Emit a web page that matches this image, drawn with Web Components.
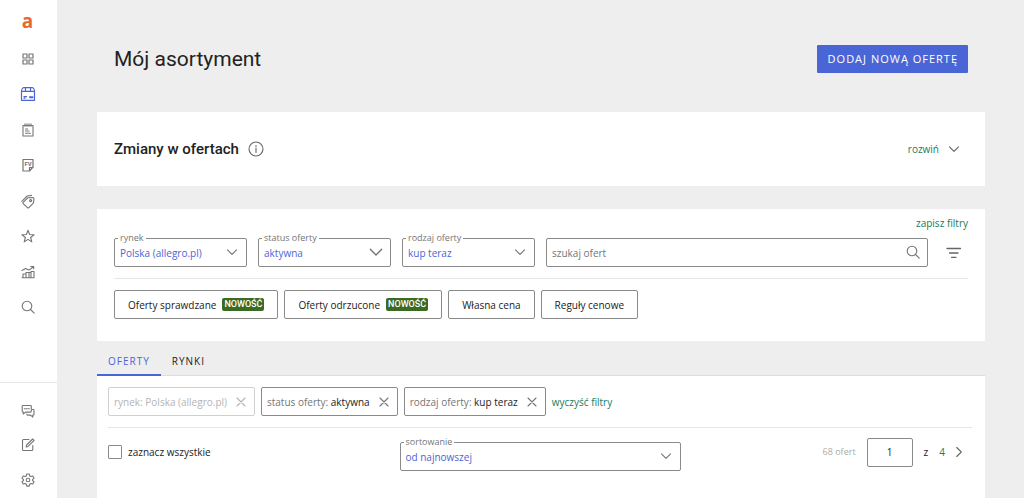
<!DOCTYPE html>
<html lang="pl">
<head>
<meta charset="utf-8">
<meta name="viewport" content="width=device-width, initial-scale=1">
<title>Mój asortyment</title>
<style>
  :root {
    --blue: #4a66d6;
    --green: #227a58;
    --ink: #222;
    --grey: #757575;
    --line: #e6e6e6;
    --text: 10px;
    --small: 9px;
  }
  body {
    margin: 0;
    background: #eee;
    color: var(--ink);
    font: var(--text)/14px "Open Sans", "Noto Sans", sans-serif;
  }
</style>
</head>
<body>
<assortment-page></assortment-page>

<script>
const ICONS = {
  grid: '<path d="M3 3h4v4H3zM9 3h4v4H9zM3 9h4v4H3zM9 9h4v4H9z" stroke-width="1.200"/>',
  box: '<path d="M1.500 5.500V14.300h13V5.500M1.500 5.500C1.500 3.500 2.700 1.700 4 1.700h8c1.300 0 2.500 1.800 2.500 3.800M1.500 5.300h13M5.500 1.700v3.500M10.500 1.700v3.500M4 10.700h2.500M4 12.200h1" stroke-width="1.200"/><path d="M10 11.200h2.500" stroke-width="2"/>',
  notepad: '<path d="M3 3.500h10v10.500h-10zM5 1.800v2.500M7 1.800v2.500M9 1.800v2.500M11 1.800v2.500M5.500 7h2M5.500 9h3.500M5.500 11.200h5"/>',
  invoice: '<path d="M3 2.500h10v7.500l-3.500 4H3zM9.500 13.800V10.500H13" stroke-width="1.200"/><text x="8.100" y="8.700" text-anchor="middle" font-family="Roboto, sans-serif" font-size="6" font-weight="700" fill="currentColor" stroke="none">FV</text>',
  tag: '<path d="M3.200 9.400l4.600-4.600 5-.3c.7 0 1.100.4 1.100 1.100l-.4 4.200-4.600 4.800c-.4.400-1 .4-1.400 0l-4.300-4c-.4-.3-.4-.8 0-1.200z"/><path d="M1.800 8.300L7.200 3l4.300-.6"/><circle cx="10.600" cy="7.600" r="1"/>',
  star: '<path d="M8 2.200l1.600 4.300 4.500.2-3.500 2.800 1.200 4.400L8 11.400l-3.800 2.500 1.200-4.400L1.900 6.700l4.500-.2z"/>',
  chart: '<path d="M2 13.700h12V7.500h-3v6M6 13.500v-5h3v5M3 13.500V10h3M9 8.500h2M2 6.500l3.500-2 3.500 1.600 4.500-3.300M10.800 2.500h2.900v2.300"/>',
  search: '<circle cx="7" cy="7" r="4.800"/><path d="M10.500 10.500l3.700 3.700"/>',
  chat: '<path d="M3 2.500h7.500c.5 0 .8.300.8.800v5c0 .5-.3.800-.8.800H5.500L3.300 11V9.100H3c-.5 0-.8-.3-.8-.8v-5c0-.5.300-.8.800-.8z"/><path d="M4.300 5.800h1M6.300 5.800h1M8.300 5.800h1M12.500 6.500h.7c.5 0 .8.300.8.800v4c0 .5-.3.800-.8.800h-.4v2l-2.200-2H7.500c-.4 0-.7-.4-.7-1"/>',
  edit: '<path d="M9 2.500H3.500c-.6 0-1 .4-1 1v9c0 .6.400 1 1 1h8.300c.6 0 1-.4 1-1V8.500"/><path d="M6.200 10l.4-2 6-6 1.500 1.400-6 6z"/>',
  gear: '<path d="M6.800 2h2.400l.5 1.900 1.200.7 1.900-.6L14 6.100l-1.400 1.300v1.300L14 10l-1.200 2-1.900-.5-1.200.7-.5 1.900H6.800l-.5-1.900-1.200-.7-1.900.5L2 10l1.400-1.300V7.400L2 6.100 3.200 4l1.900.6 1.200-.7z"/><circle cx="8" cy="8" r="1.800"/>',
  info: '<circle cx="8" cy="8" r="7"/><path d="M8 7v4.500M8 4.500v1"/>',
  down: '<path d="M3.500 5.800L8 10.300l4.500-4.500"/>',
  downwide: '<path d="M2.300 5.300L8 11l5.700-5.700" stroke-width="1.400"/>',
  right: '<path d="M5.700 3.500l4.600 4.500-4.600 4.500"/>',
  close: '<path d="M4 4l8 8M12 4l-8 8"/>',
  filter: '<path d="M1 3.500h13.500M3.500 8h8.500M5.500 12.300h4.500" stroke-width="1.300"/>'
};

/* Registers a custom element whose shadow tree is cloned from one template. */
function component(name, render, setup) {
  customElements.define(name, class extends HTMLElement {
    connectedCallback() {
      if (this.shadowRoot) return;
      const template = document.createElement('template');
      template.innerHTML = '<style>*{box-sizing:border-box}button,input,select{font:inherit;color:inherit;margin:0}:focus-visible{outline:1px solid var(--blue)}</style>' + render(this);
      this.attachShadow({ mode: 'open' }).append(template.content.cloneNode(true));
      if (setup) setup(this);
    }
  });
}

component('ui-icon', el => `
  <style>
    :host { display: block; flex: none; width: 16px; height: 16px; }
    svg { display: block; width: 100%; height: 100%; fill: none; stroke: currentColor; stroke-width: 1.100; stroke-linejoin: round; stroke-linecap: round; }
  </style>
  <svg viewBox="0 0 16 16" aria-hidden="true">${ICONS[el.getAttribute('name')]}</svg>`);

component('nav-link', el => `
  <style>
    :host { display: flex; flex: 1; color: #757575; }
    :host([active]) { color: var(--blue); }
    a { display: flex; flex: 1; align-items: center; justify-content: center; color: inherit; }
  </style>
  <a href="#" aria-label="${el.getAttribute('label')}"><ui-icon name="${el.getAttribute('icon')}"></ui-icon></a>`);

component('side-bar', () => `
  <style>
    :host { display: flex; flex-direction: column; position: sticky; top: 0; flex: none; width: 57px; height: 100vh; background: #fff; padding-right: 2px; box-sizing: border-box; }
    .logo { display: grid; place-items: center; flex: none; height: 41px; color: #e8672c; text-decoration: none; font: 700 19px/38px "Open Sans", sans-serif; }
    nav { display: flex; flex-direction: column; }
    .main { height: 284px; }
    .foot { height: 116px; margin: auto -2px 0 0; padding: 11px 2px 1px 0; border-top: 1px solid var(--line); }
  </style>
  <a class="logo" href="#">a</a>
  <nav class="main">
    <nav-link icon="grid" label="Pulpit"></nav-link>
    <nav-link icon="box" label="Asortyment" active></nav-link>
    <nav-link icon="notepad" label="Zamówienia"></nav-link>
    <nav-link icon="invoice" label="Faktury"></nav-link>
    <nav-link icon="tag" label="Promocje"></nav-link>
    <nav-link icon="star" label="Oceny"></nav-link>
    <nav-link icon="chart" label="Statystyki"></nav-link>
    <nav-link icon="search" label="Szukaj"></nav-link>
  </nav>
  <nav class="foot">
    <nav-link icon="chat" label="Wiadomości"></nav-link>
    <nav-link icon="edit" label="Notatki"></nav-link>
    <nav-link icon="gear" label="Ustawienia"></nav-link>
  </nav>`);

component('select-field', el => `
  <style>
    :host { display: block; position: relative; height: 29px; }
    select { appearance: none; display: block; width: 100%; height: 29px; padding: 0 28px 0 5px; border: 1px solid #8a8a8a; border-radius: 2px; background: #fff; color: var(--blue); }
    label { position: absolute; top: -7px; left: 4px; padding: 0 2px; background: #fff; color: var(--grey); font-size: var(--small); line-height: 14px; }
    ui-icon { position: absolute; top: 6px; right: 7px; color: #757575; pointer-events: none; }
  </style>
  <select id="field"><option>${el.getAttribute('value')}</option></select>
  <label for="field"><slot></slot></label>
  <ui-icon name="${el.getAttribute('arrow') || 'down'}"></ui-icon>`);

component('search-field', () => `
  <style>
    :host { display: block; position: relative; }
    input { display: block; width: 100%; height: 29px; padding: 0 30px 0 5px; border: 1px solid #8a8a8a; border-radius: 2px; background: #fff; }
    input::placeholder { color: var(--grey); opacity: 1; }
    ui-icon { position: absolute; top: 6px; right: 7px; color: #757575; }
  </style>
  <input type="text" placeholder="szukaj ofert" aria-label="szukaj ofert"><ui-icon name="search"></ui-icon>`);

component('quick-filter', el => `
  <style>
    :host { display: block; }
    button { display: flex; align-items: center; gap: 6px; height: 29px; padding: 0 13px; border: 1px solid #8a8a8a; border-radius: 2px; background: #fff; }
    b { padding: 0 2px; border-radius: 2px; background: #3b6b22; color: #fff; font: 500 9px/13px Roboto, sans-serif; }
  </style>
  <button type="button"><slot></slot>${el.hasAttribute('fresh') ? '<b>NOWOŚĆ</b>' : ''}</button>`);

component('filter-chip', el => `
  <style>
    :host { display: flex; align-items: center; height: 29px; padding: 0 5px; border: 1px solid #8a8a8a; border-radius: 2px; background: #fff; box-sizing: border-box; }
    :host([locked]) { border-color: #d0d0d0; color: #b4b4b4; }
    span { color: var(--grey); }
    :host([locked]) span { color: inherit; }
    button { display: block; padding: 0; margin-left: 6px; border: 0; background: none; color: #757575; }
    :host([locked]) button { color: #b4b4b4; }
  </style>
  <span>${el.getAttribute('label')}:&nbsp;</span><slot></slot>
  <button type="button" aria-label="usuń filtr" ${el.hasAttribute('locked') ? 'disabled' : ''}><ui-icon name="close"></ui-icon></button>`);

component('text-link', () => `
  <style>
    :host { display: block; }
    a { color: var(--green); text-decoration: none; }
  </style>
  <a href="#"><slot></slot></a>`);

component('white-panel', () => `
  <style>:host { display: block; background: #fff; }</style>
  <slot></slot>`);

component('page-header', () => `
  <style>
    :host { display: flex; align-items: center; justify-content: space-between; padding: 45px 17px 39px; }
    h1 { margin: 0; font: 400 21px/28px Roboto, sans-serif; }
    button { height: 28px; padding: 0 10px 0 11px; border: 0; border-radius: 1px; background: var(--blue); color: #fff; font-size: 11px; letter-spacing: 1px; }
  </style>
  <h1>Mój asortyment</h1>
  <button type="button">DODAJ NOWĄ OFERTĘ</button>`);

component('offer-changes', () => `
  <style>
    :host { display: block; }
    section { display: flex; align-items: center; height: 74px; padding: 0 17px; }
    h2 { margin: 0 9px 0 0; font: 500 15px/20px Roboto, sans-serif; }
    ui-icon.info { color: #666; }
    button { display: flex; align-items: center; margin-left: auto; padding: 0; border: 0; background: none; color: var(--green); }
    .arrow { display: grid; place-items: center; width: 29px; color: #666; }
  </style>
  <white-panel><section>
    <h2>Zmiany w ofertach</h2><ui-icon class="info" name="info"></ui-icon>
    <button type="button">rozwiń<span class="arrow"><ui-icon name="down"></ui-icon></span></button>
  </section></white-panel>`);

component('offer-filters', () => `
  <style>
    :host { display: block; margin-top: 23px; }
    section { padding: 7px 17px 22px; }
    text-link { text-align: right; }
    .fields { display: grid; grid-template-columns: 133px 133px 133px 1fr 29px; column-gap: 11px; padding: 8px 0 11px; border-bottom: 1px solid var(--line); }
    .fields button { display: grid; place-items: center; padding: 0; border: 0; background: none; color: #666; }
    .quick { display: flex; flex-wrap: wrap; gap: 6px; padding-top: 11px; }
  </style>
  <white-panel><section>
    <text-link>zapisz filtry</text-link>
    <div class="fields">
      <select-field value="Polska (allegro.pl)">rynek</select-field>
      <select-field value="aktywna" arrow="downwide">status oferty</select-field>
      <select-field value="kup teraz">rodzaj oferty</select-field>
      <search-field></search-field>
      <button type="button" aria-label="więcej filtrów"><ui-icon name="filter"></ui-icon></button>
    </div>
    <div class="quick">
      <quick-filter fresh>Oferty sprawdzane</quick-filter>
      <quick-filter fresh>Oferty odrzucone</quick-filter>
      <quick-filter>Własna cena</quick-filter>
      <quick-filter>Reguły cenowe</quick-filter>
    </div>
  </section></white-panel>`);

component('tab-list', () => `
  <style>
    :host { display: flex; height: 35px; border-bottom: 1px solid #ddd; box-sizing: border-box; }
    button { height: 35px; padding: 6px 11px 0; border: 0; border-bottom: 2px solid transparent; background: none; letter-spacing: 1px; }
    button[aria-selected="true"] { border-color: var(--blue); color: var(--blue); }
  </style>
  <button type="button" role="tab" aria-selected="true">OFERTY</button>
  <button type="button" role="tab" aria-selected="false">RYNKI</button>`,
  el => el.setAttribute('role', 'tablist'));

component('page-switch', () => `
  <style>
    :host { display: flex; align-items: center; justify-content: flex-end; }
    .count { margin-right: 11px; color: #aaa; font-size: var(--small); }
    input { width: 46px; height: 29px; padding: 0; border: 1px solid #8a8a8a; border-radius: 2px; background: #fff; text-align: center; }
    .of { margin: 0 11px; }
    button { display: block; margin: 0 5px 0 6px; padding: 0; border: 0; background: none; color: #666; }
  </style>
  <span class="count">68 ofert</span>
  <input type="text" value="1" aria-label="strona">
  <span class="of">z</span>
  <text-link>4</text-link>
  <button type="button" aria-label="następna strona"><ui-icon name="right"></ui-icon></button>`);

component('offer-list', () => `
  <style>
    :host { display: flex; flex-direction: column; flex: 1; background: #fff; padding: 11px 13px 0 11px; }
    .chips { display: flex; flex-wrap: wrap; align-items: center; gap: 6px; padding-bottom: 11px; border-bottom: 1px solid var(--line); }
    .tools { display: grid; grid-template-columns: 1fr 281px 1fr; align-items: center; padding-top: 5px; }
    .all { display: flex; align-items: center; gap: 6px; }
    input { appearance: none; width: 14px; height: 14px; border: 1px solid #8a8a8a; border-radius: 1px; background: #fff; }
    input:checked { background: var(--blue); }
    .sort { padding-top: 9px; }
  </style>
  <div class="chips">
    <filter-chip label="rynek" locked>Polska (allegro.pl)</filter-chip>
    <filter-chip label="status oferty">aktywna</filter-chip>
    <filter-chip label="rodzaj oferty">kup teraz</filter-chip>
    <text-link>wyczyść filtry</text-link>
  </div>
  <div class="tools">
    <div class="all"><input type="checkbox" id="all"><label for="all">zaznacz wszystkie</label></div>
    <div class="sort"><select-field value="od najnowszej">sortowanie</select-field></div>
    <page-switch></page-switch>
  </div>`);

component('assortment-page', () => `
  <style>
    :host { display: flex; min-height: 100vh; }
    main { display: flex; flex-direction: column; flex: 1; min-width: 0; padding: 0 39px 0 40px; }
  </style>
  <side-bar></side-bar>
  <main>
    <page-header></page-header>
    <offer-changes></offer-changes>
    <offer-filters></offer-filters>
    <tab-list></tab-list>
    <offer-list></offer-list>
  </main>`);
</script>
</body>
</html>
